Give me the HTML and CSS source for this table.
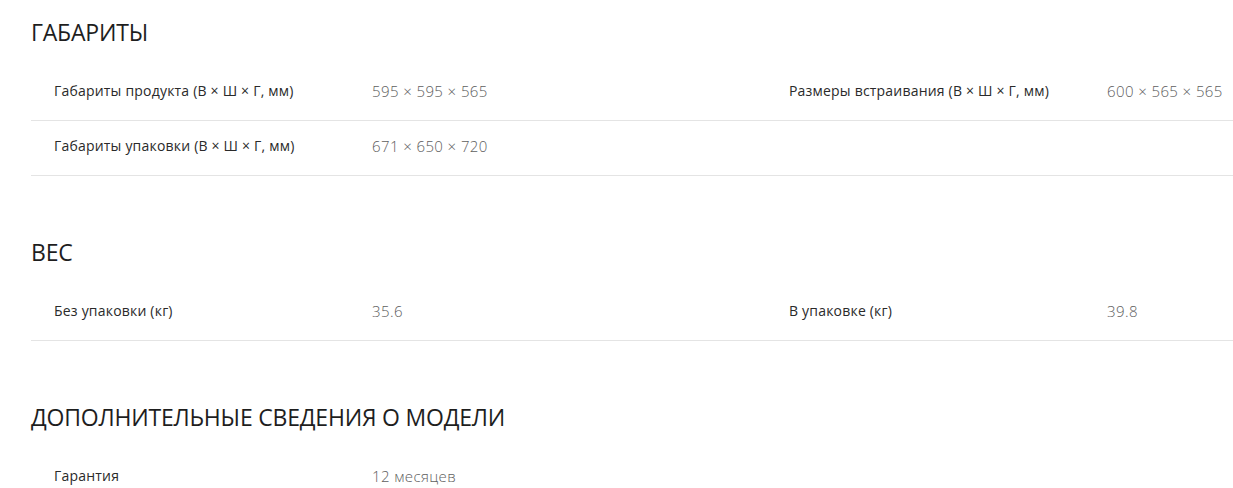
FILE: index.html
```html
<!DOCTYPE html>
<html lang="ru">
<head>
    <meta charset="UTF-8">
    <meta name="viewport" content="width=device-width, initial-scale=1.0">
    <title>Характеристики</title>
    <link rel="stylesheet" href="styles.css">
</head>
<body>
    <div class="specs">
        <!-- Габариты -->
        <section class="spec-group">
            <h2>ГАБАРИТЫ</h2>
            <div class="spec-row">
                <div class="spec-item">
                    <span class="spec-label">Габариты продукта (В × Ш × Г, мм)</span>
                    <span class="spec-value">595 × 595 × 565</span>
                </div>
                <div class="spec-item">
                    <span class="spec-label">Размеры встраивания (В × Ш × Г, мм)</span>
                    <span class="spec-value">600 × 565 × 565</span>
                </div>
            </div>
            <div class="spec-row">
                <div class="spec-item">
                    <span class="spec-label">Габариты упаковки (В × Ш × Г, мм)</span>
                    <span class="spec-value">671 × 650 × 720</span>
                </div>
            </div>
        </section>

        <!-- Вес -->
        <section class="spec-group">
            <h2>ВЕС</h2>
            <div class="spec-row">
                <div class="spec-item">
                    <span class="spec-label">Без упаковки (кг)</span>
                    <span class="spec-value">35.6</span>
                </div>
                <div class="spec-item">
                    <span class="spec-label">В упаковке (кг)</span>
                    <span class="spec-value">39.8</span>
                </div>
            </div>
        </section>

        <!-- Дополнительные сведения -->
        <section class="spec-group">
            <h2>ДОПОЛНИТЕЛЬНЫЕ СВЕДЕНИЯ О МОДЕЛИ</h2>
            <div class="spec-row">
                <div class="spec-item">
                    <span class="spec-label">Гарантия</span>
                    <span class="spec-value">12 месяцев</span>
                </div>
            </div>
        </section>
    </div>
</body>
</html>
```

FILE: styles.css
```css
/* Общие стили */
html {
    overflow: hidden;
}

body {
    margin: 0;
    padding: 0;
    background: #ffffff;
    font-family: "Open Sans", "Noto Sans", sans-serif;
    color: #333333;
}

.specs {
    width: 1470px;
    margin-left: 31px;
    padding-top: 17px;
}

/* Группа характеристик */
.spec-group {
    margin-bottom: 61px;
}

.spec-group h2 {
    margin: 0 0 19px;
    font-size: 23px;
    line-height: 30px;
    font-weight: 400;
    color: #1e1e1e;
    letter-spacing: -0.2px;
}

/* Строка таблицы */
.spec-row {
    display: grid;
    grid-template-columns: 735px 735px;
    height: 49px;
    padding-bottom: 5px;
    border-bottom: 1px solid #e4e4e4;
}

.spec-item {
    display: grid;
    grid-template-columns: 318px 1fr;
    align-items: center;
    padding-left: 23px;
    font-size: 14px;
}

.spec-label {
    color: #2a2a2a;
    letter-spacing: 0.2px;
}

.spec-value {
    color: #5e5e5e;
    font-size: 15px;
    font-weight: 300;
    letter-spacing: 0.4px;
}
```
